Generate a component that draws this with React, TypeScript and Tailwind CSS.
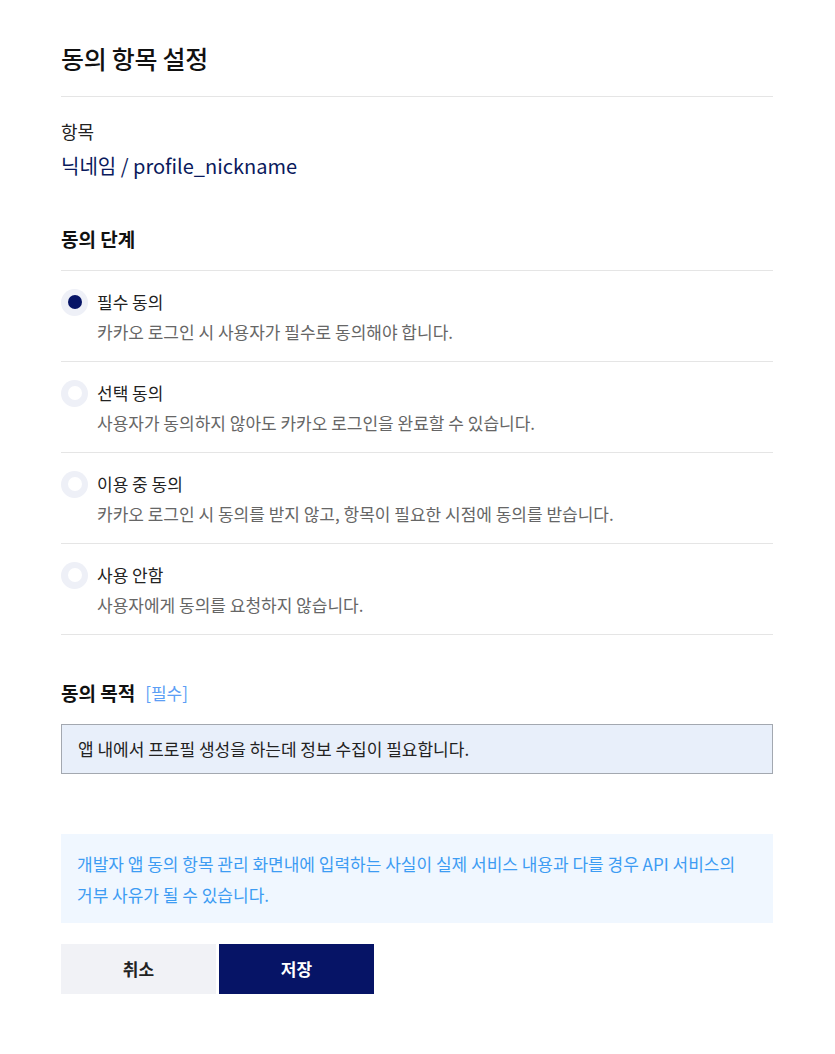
import React from "react";

const options = [
  { title: "필수 동의", desc: "카카오 로그인 시 사용자가 필수로 동의해야 합니다.", checked: true },
  { title: "선택 동의", desc: "사용자가 동의하지 않아도 카카오 로그인을 완료할 수 있습니다.", checked: false },
  { title: "이용 중 동의", desc: "카카오 로그인 시 동의를 받지 않고, 항목이 필요한 시점에 동의를 받습니다.", checked: false },
  { title: "사용 안함", desc: "사용자에게 동의를 요청하지 않습니다.", checked: false },
];

export default function App() {
  return (
    <div
      className="min-h-screen bg-white pl-[61px] pr-[62px]"
      style={{ fontFamily: '"Noto Sans CJK KR", "Noto Sans", sans-serif' }}
    >
      <div className="w-[712px] pt-[40px]">
        <h1 className="text-[25px] leading-[36px] font-medium text-[#111] tracking-[-0.3px] pb-[20px] border-b border-[#e5e5e5]">
          동의 항목 설정
        </h1>

        <div className="pt-[20px]">
          <div className="text-[18px] leading-[28px] text-[#222]">항목</div>
          <div className="mt-[6px] text-[20px] leading-[30px] text-[#0a1a5c]">
            닉네임 / profile_nickname
          </div>
        </div>

        <h2 className="mt-[44px] text-[19px] leading-[28px] font-bold text-[#111] pb-[17px] border-b border-[#e5e5e5]">
          동의 단계
        </h2>

        <div>
          {options.map((o) => (
            <div key={o.title} className="flex gap-[9px] pt-[16px] pb-[14px] border-b border-[#e5e5e5]">
              <div className="h-[30px] flex items-center">
                <div className="w-[27px] h-[27px] rounded-full bg-[#eef0f7] flex items-center justify-center">
                  {o.checked ? (
                    <div className="w-[14px] h-[14px] rounded-full bg-[#061466]" />
                  ) : (
                    <div className="w-[14px] h-[14px] rounded-full bg-white" />
                  )}
                </div>
              </div>
              <div>
                <div className="text-[17px] leading-[30px] text-[#222]">{o.title}</div>
                <div className="text-[17px] leading-[30px] text-[#666]">{o.desc}</div>
              </div>
            </div>
          ))}
        </div>

        <div className="mt-[44px] flex items-center gap-[10px]">
          <h2 className="text-[19px] leading-[28px] font-bold text-[#111]">동의 목적</h2>
          <span className="text-[17px] leading-[28px] text-[#5c9ef5]">[필수]</span>
        </div>

        <div className="mt-[17px] h-[50px] border border-[#a3a8b0] bg-[#e8effa] flex items-center px-[16px] text-[17px] text-[#222]">
          앱 내에서 프로필 생성을 하는데 정보 수집이 필요합니다.
        </div>

        <div className="mt-[60px] bg-[#f0f7ff] pt-[14px] pb-[13px] px-[16px] text-[17px] leading-[31px] text-[#3d9cf3]">
          개발자 앱 동의 항목 관리 화면내에 입력하는 사실이 실제 서비스 내용과 다를 경우 API 서비스의
          <br />
          거부 사유가 될 수 있습니다.
        </div>

        <div className="mt-[21px] flex gap-[3px]">
          <button className="w-[155px] h-[50px] bg-[#f1f2f6] text-[17px] font-bold text-[#222]">취소</button>
          <button className="w-[155px] h-[50px] bg-[#061466] text-[17px] font-bold text-white">저장</button>
        </div>
      </div>
    </div>
  );
}
